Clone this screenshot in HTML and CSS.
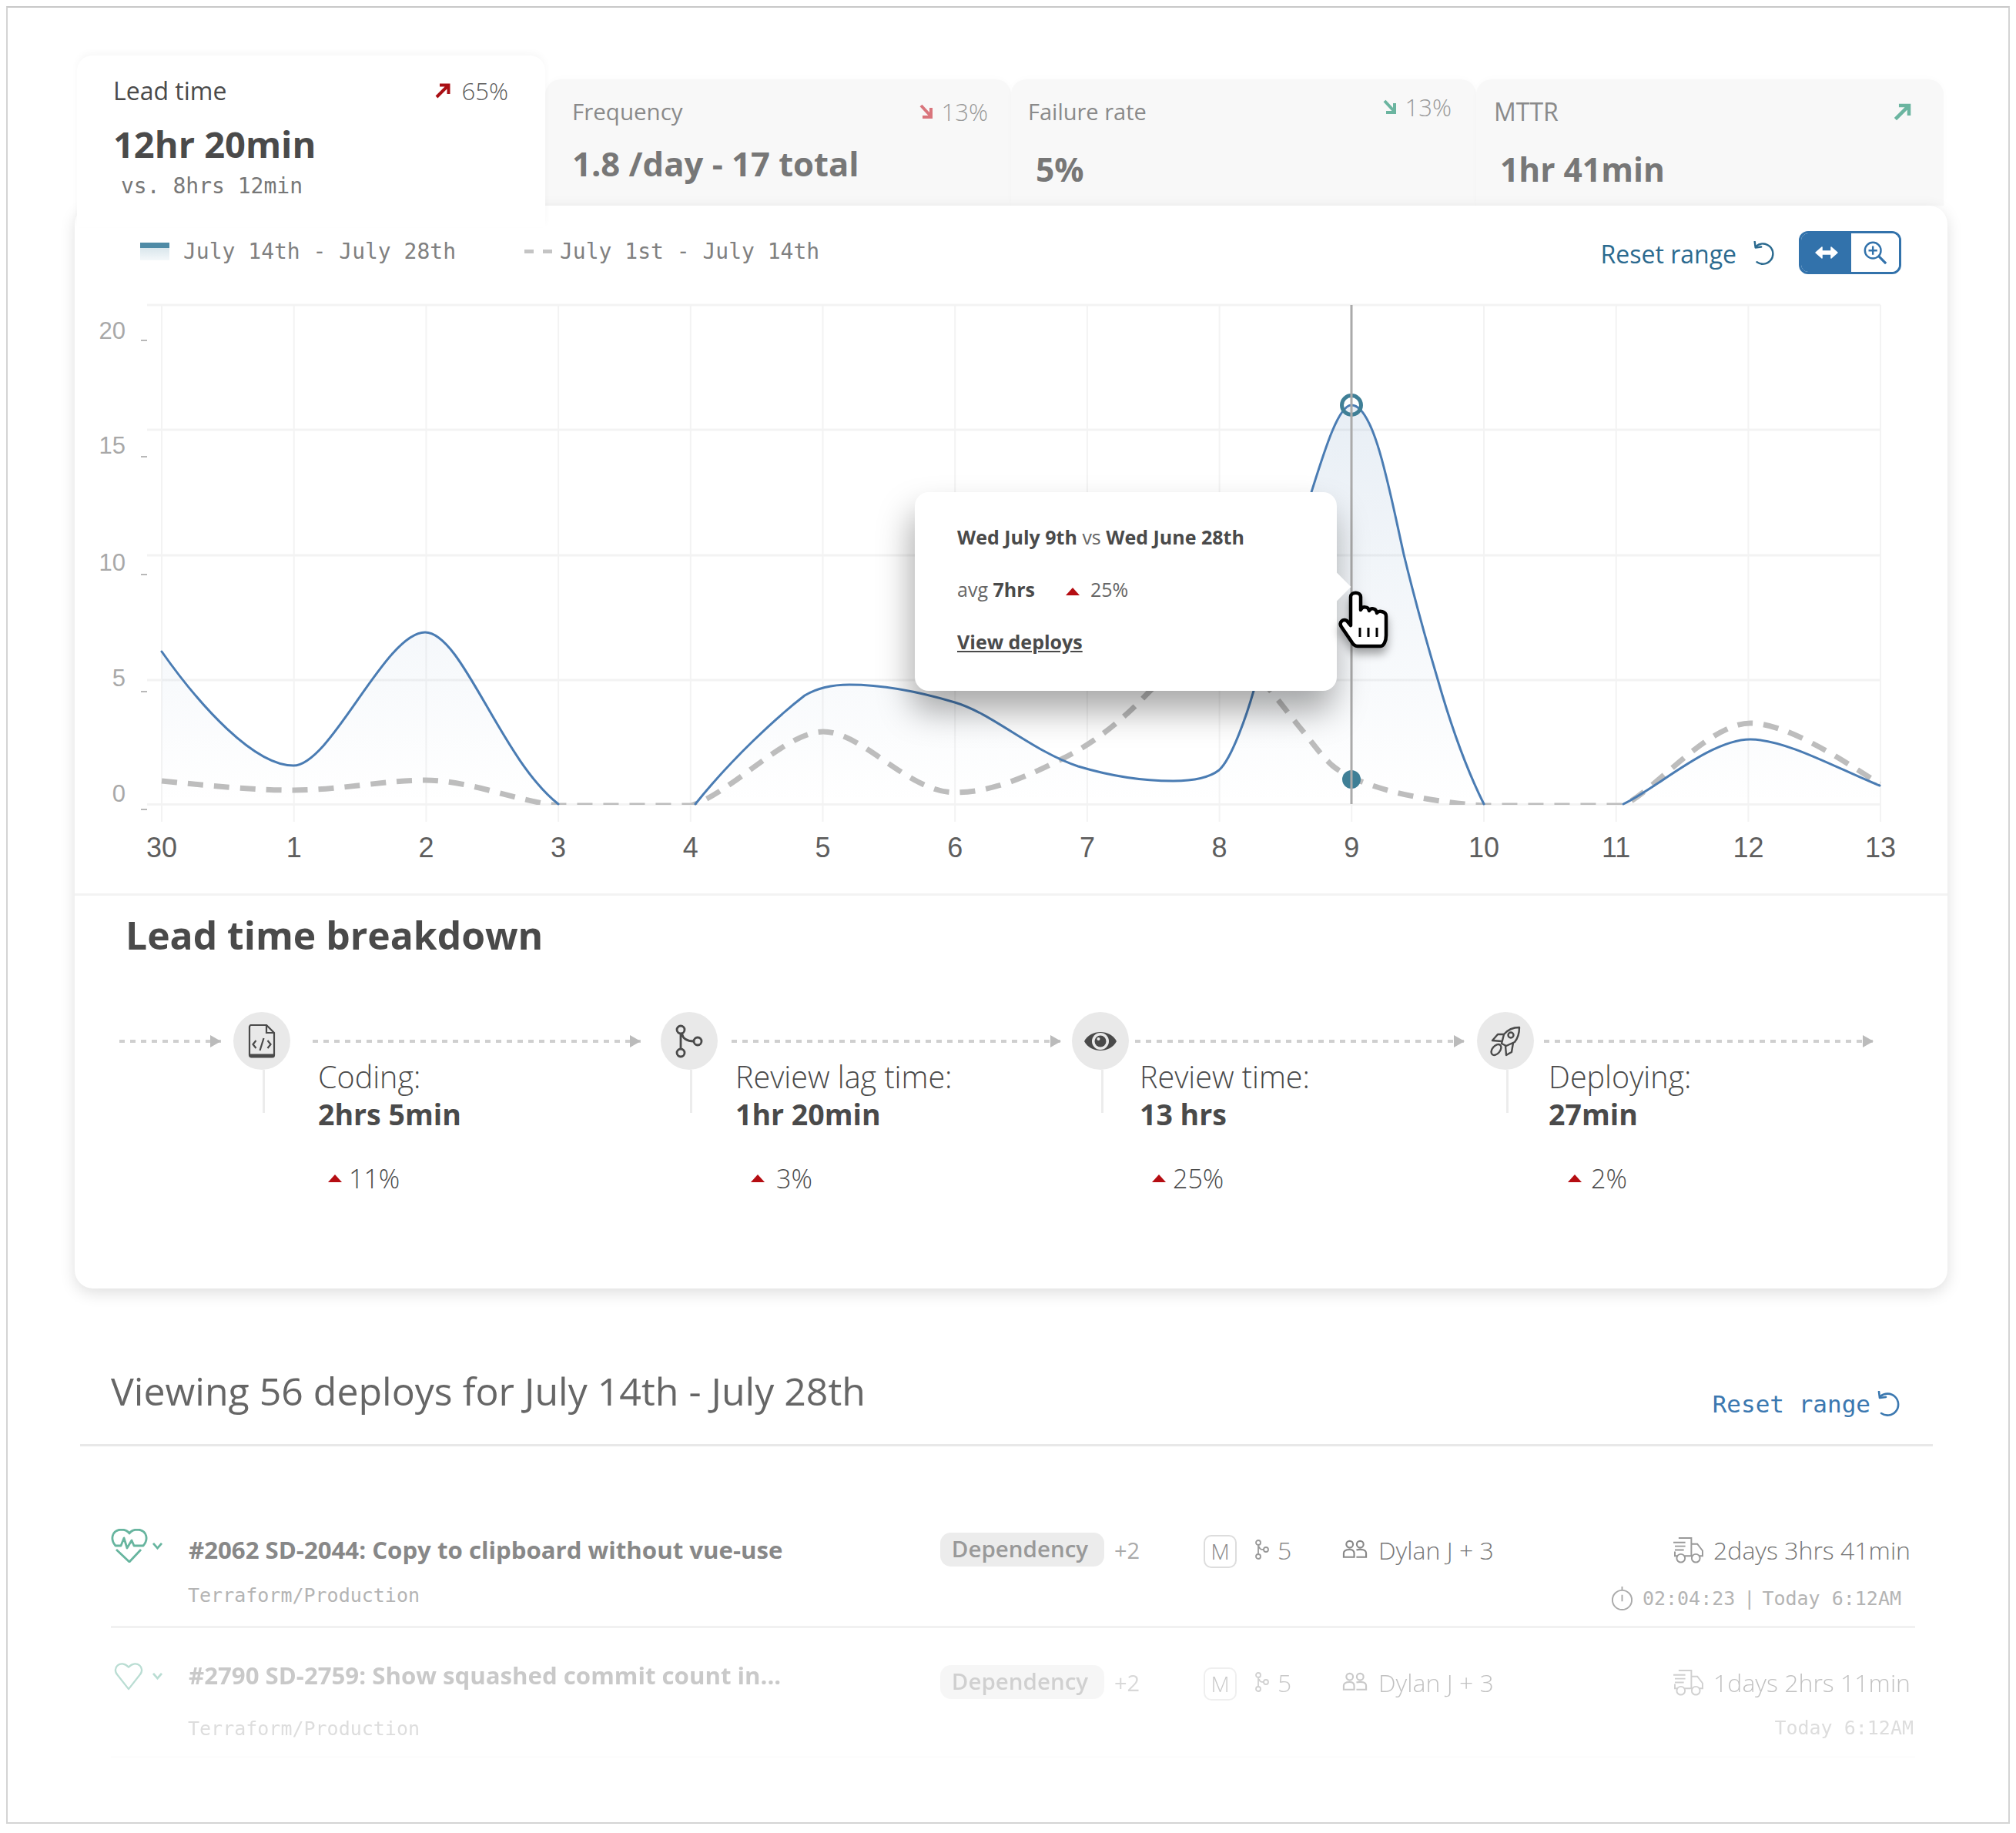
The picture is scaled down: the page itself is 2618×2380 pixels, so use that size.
FILE: index.html
```html
<!DOCTYPE html>
<html lang="en">
<head>
<meta charset="utf-8">
<title>Lead time</title>
<link rel="stylesheet" href="styles.css">
</head>
<body>
<svg class="defs" width="0" height="0" aria-hidden="true">
  <symbol id="i-reset" viewBox="0 0 36 34"><path d="M8 7 A14 14 0 1 1 9 29" fill="none" stroke="currentColor" stroke-width="2.6" stroke-linecap="round"/><path d="M6 1 L7 9 L15 8" fill="none" stroke="currentColor" stroke-width="2.6" stroke-linecap="round" stroke-linejoin="round"/></symbol>
  <symbol id="i-up" viewBox="0 0 22 20"><path d="M3 18 L18 3 M7 2.5 H18.5 V14" fill="none" stroke="currentColor" stroke-width="4"/></symbol>
  <symbol id="i-down" viewBox="0 0 20 20"><path d="M3 2 L16 16 M16 5 V17 H5" fill="none" stroke="currentColor" stroke-width="4"/></symbol>
  <symbol id="i-branch" viewBox="0 0 18 26"><g fill="none" stroke="currentColor" stroke-width="1.8"><circle cx="4" cy="4" r="3"/><circle cx="4" cy="22" r="3"/><circle cx="14" cy="13" r="3"/><path d="M4 7 V19 M5 9 C6 13 8 13 11 13"/></g></symbol>
  <symbol id="i-people" viewBox="0 0 34 26"><g fill="none" stroke="currentColor" stroke-width="2.2"><circle cx="10" cy="6" r="4.5"/><circle cx="24" cy="6" r="4.5"/><path d="M2 23 V18 C2 14 6 13 10 13 C13 13 16 14 16 18 V23 Z"/><path d="M19 13.5 C25 12 32 13 32 18 V23 H19"/></g></symbol>
  <symbol id="i-truck" viewBox="0 0 42 36"><g fill="none" stroke="currentColor" stroke-width="2"><path d="M8 2 H25 V26 H16 M25 10 H33 L40 19 V26 H36 M6 26 H3 V20"/><circle cx="11" cy="29" r="5.5"/><circle cx="31" cy="29" r="5.5"/><path d="M1 8 H17 M3 13 H17 M3 18 H15"/></g></symbol>
  <symbol id="i-watch" viewBox="0 0 30 34"><g fill="none" stroke="currentColor" stroke-width="2"><circle cx="15" cy="19" r="13"/><path d="M15 1 V6 M15 12 V21"/></g></symbol>
  <symbol id="i-chev" viewBox="0 0 16 12"><path d="M2 2 L8 9 L14 2" fill="none" stroke="currentColor" stroke-width="3"/></symbol>
</svg>

<main class="frame">
  <section class="metrics">
    <article class="tab tab-active">
      <div class="tab-head">
        <span class="tab-label">Lead time</span>
        <span class="trend trend-lead"><svg class="trend-ic ic-red"><use href="#i-up"/></svg>65%</span>
      </div>
      <div class="tab-value">12hr 20min</div>
      <div class="tab-sub">vs. 8hrs 12min</div>
    </article>
    <article class="tab tab-freq">
      <div class="tab-head">
        <span class="tab-label">Frequency</span>
        <span class="trend"><svg class="trend-ic ic-rose"><use href="#i-down"/></svg>13%</span>
      </div>
      <div class="tab-value">1.8 /day - 17 total</div>
    </article>
    <article class="tab tab-fail">
      <div class="tab-head">
        <span class="tab-label">Failure rate</span>
        <span class="trend trend-high"><svg class="trend-ic ic-green"><use href="#i-down"/></svg>13%</span>
      </div>
      <div class="tab-value">5%</div>
    </article>
    <article class="tab tab-mttr">
      <div class="tab-head">
        <span class="tab-label">MTTR</span>
        <span class="trend"><svg class="trend-ic trend-ic-lg ic-green"><use href="#i-up"/></svg></span>
      </div>
      <div class="tab-value">1hr 41min</div>
    </article>
  </section>

  <section class="panel">
    <header class="chart-head">
      <div class="legend">
        <span class="legend-item legend-a"><i class="swatch"></i>July 14th - July 28th</span>
        <span class="legend-item"><i class="swatch-dash"></i>July 1st - July 14th</span>
      </div>
      <div class="chart-tools">
        <span class="reset"><span>Reset range</span><svg class="reset-ic"><use href="#i-reset"/></svg></span>
        <div class="toggle">
          <span class="toggle-on"><svg viewBox="0 0 34 20" width="34" height="20"><path d="M3 10 L11 3 V8 H23 V3 L31 10 L23 17 V12 H11 V17 Z" fill="#fff" stroke="#fff" stroke-width="1.5" stroke-linejoin="round"/></svg></span>
          <span class="toggle-off"><svg viewBox="0 0 34 34" width="32" height="32"><g fill="none" stroke="#3272ab" stroke-width="2.6"><circle cx="14" cy="14" r="11"/><path d="M14 8 V20 M8 14 H20"/><path d="M22 22 L32 32" stroke-width="3.4"/></g></svg></span>
        </div>
      </div>
    </header>

    <div class="chart">
      <svg class="chart-svg" viewBox="97 387 2435 773" width="2435" height="773">
        <defs>
          <linearGradient id="area" gradientUnits="userSpaceOnUse" x1="0" y1="525" x2="0" y2="1044">
            <stop offset="0" stop-color="#3f75ad" stop-opacity=".12"/>
            <stop offset="1" stop-color="#3f75ad" stop-opacity="0"/>
          </linearGradient>
          <clipPath id="plot"><rect x="190" y="390" width="2260" height="655"/></clipPath>
        </defs>
        <g class="grid-v">
          <path d="M210 396V1067M381.700 396V1067M553.400 396V1067M725.100 396V1067M896.800 396V1067M1068.500 396V1067M1240.200 396V1067M1411.900 396V1067M1583.600 396V1067M1755.300 396V1067M1927 396V1067M2098.700 396V1067M2270.400 396V1067M2442 396V1067"/>
        </g>
        <g class="grid-h">
          <path d="M191 396H2442M191 558H2442M191 721H2442M191 883H2442M191 1044.500H2442"/>
        </g>
        <g class="ticks">
          <path d="M183 442H191M183 593H191M183 746H191M183 898H191M183 1051H191"/>
        </g>
        <g class="y-labels">
          <text x="163" y="440">20</text>
          <text x="163" y="589">15</text>
          <text x="163" y="741">10</text>
          <text x="163" y="891">5</text>
          <text x="163" y="1041">0</text>
        </g>
        <g class="x-labels">
          <text x="210" y="1113">30</text>
          <text x="381.700" y="1113">1</text>
          <text x="553.400" y="1113">2</text>
          <text x="725.100" y="1113">3</text>
          <text x="896.800" y="1113">4</text>
          <text x="1068.500" y="1113">5</text>
          <text x="1240.200" y="1113">6</text>
          <text x="1411.900" y="1113">7</text>
          <text x="1583.600" y="1113">8</text>
          <text x="1755.300" y="1113">9</text>
          <text x="1927" y="1113">10</text>
          <text x="2098.700" y="1113">11</text>
          <text x="2270.400" y="1113">12</text>
          <text x="2442" y="1113">13</text>
        </g>
        <g fill="url(#area)">
          <path d="M210 1044V846C260 917 330 994 381 994C430 994 500 821 552 821C600 821 650 985 725 1044Z"/>
          <path d="M903 1044C950 985 1010 930 1045 903C1065 891 1085 889 1103 889C1150 889 1200 900 1240 912C1290 927 1340 975 1400 995C1450 1010 1490 1014 1523 1014C1550 1014 1570 1010 1583 1000C1600 985 1620 925 1628 897C1650 815 1680 700 1703 639C1720 585 1738 526 1755 526C1785 526 1805 640 1823 720C1840 790 1850 825 1867 882C1885 945 1905 1000 1927 1044Z"/>
          <path d="M2108 1044C2150 1025 2220 960 2273 960C2320 960 2390 1000 2441 1020V1044Z"/>
        </g>
        <path class="line-prev" clip-path="url(#plot)" d="M210 1014C270 1020 330 1026 381 1026C440 1026 500 1013 552 1013C610 1013 670 1040 725 1046L897 1046C950 1030 1020 950 1069 950C1120 950 1180 1029 1240 1029C1290 1029 1340 1005 1380 985C1420 965 1450 940 1475 916C1510 880 1550 840 1583 830C1610 840 1630 870 1650 897C1665 915 1680 935 1690 947C1705 965 1715 980 1729 993C1760 1020 1840 1040 1927 1046L2108 1046C2150 1025 2220 939 2273 939C2320 939 2390 985 2441 1018"/>
        <g class="line-cur">
          <path d="M210 846C260 917 330 994 381 994C430 994 500 821 552 821C600 821 650 985 725 1044"/>
          <path d="M903 1044C950 985 1010 930 1045 903C1065 891 1085 889 1103 889C1150 889 1200 900 1240 912C1290 927 1340 975 1400 995C1450 1010 1490 1014 1523 1014C1550 1014 1570 1010 1583 1000C1600 985 1620 925 1628 897C1650 815 1680 700 1703 639C1720 585 1738 526 1755 526C1785 526 1805 640 1823 720C1840 790 1850 825 1867 882C1885 945 1905 1000 1927 1044"/>
          <path d="M2108 1044C2150 1025 2220 960 2273 960C2320 960 2390 1000 2441 1020"/>
        </g>
        <circle class="dot" cx="1755" cy="1012" r="12"/>
        <circle class="ring" cx="1755" cy="526" r="12.500"/>
        <path class="cursor-line" d="M1755 396V1044"/>
      </svg>

      <aside class="tooltip">
        <p class="tip-line"><b>Wed July 9th</b> vs <b>Wed June 28th</b></p>
        <p class="tip-line">avg <b>7hrs</b><i class="tri tip-tri"></i>25%</p>
        <p class="tip-line"><a class="tip-link">View deploys</a></p>
      </aside>
      <svg class="hand" viewBox="-3 -3 71 81" width="71" height="81">
        <path d="M15 8C15 1 28 1 28 8V25C30 20 38 20 39 26C41 22 48 22 49 29C52 25 61 27 61 33V58C61 65 58 72 54 72H24C20 72 18 70 16 66L3 47C-1 41 5 36 10 39L15 45Z" fill="#fff" stroke="#000" stroke-width="4.500" stroke-linejoin="round"/>
        <path d="M27 48V60M38 48V60M49 48V60" stroke="#000" stroke-width="3" fill="none"/>
      </svg>
    </div>

    <section class="breakdown">
      <h2 class="breakdown-title">Lead time breakdown</h2>
      <div class="flow">
        <div class="lead-arrow"><span class="dash"></span></div>

        <div class="step step-1">
          <div class="step-head">
            <span class="node"><svg viewBox="0 0 36 44" width="36" height="44"><g fill="none" stroke="#4a4a4a" stroke-width="2.200"><path d="M2 3.500C2 2 3 1 4.500 1H24L34 11V40C34 41.500 33 42.500 31.500 42.500H4.500C3 42.500 2 41.500 2 40Z"/><path d="M24 1V11H34"/><path d="M10.500 21L6.500 26L10.500 31M25.500 21L29.500 26L25.500 31M20.500 18L15.500 34"/></g><path d="M2 38.500H34V40C34 41.500 33 42.500 31.500 42.500H4.500C3 42.500 2 41.500 2 40Z" fill="#4a4a4a"/></svg></span>
            <span class="dash"></span>
          </div>
          <div class="step-body">
            <span class="stem"></span>
            <div class="step-text">
              <div class="step-label">Coding:</div>
              <div class="step-value">2hrs 5min</div>
              <div class="step-delta"><i class="tri"></i>11%</div>
            </div>
          </div>
        </div>

        <div class="step step-2">
          <div class="step-head">
            <span class="node"><svg viewBox="0 0 38 44" width="38" height="44"><g fill="none" stroke="#4a4a4a" stroke-width="2.800"><circle cx="8" cy="7" r="5"/><circle cx="8" cy="37" r="5"/><circle cx="30" cy="22" r="5"/><path d="M8 12V32M9.500 12C11 20 17 22 25 22"/></g></svg></span>
            <span class="dash"></span>
          </div>
          <div class="step-body">
            <span class="stem"></span>
            <div class="step-text">
              <div class="step-label">Review lag time:</div>
              <div class="step-value">1hr 20min</div>
              <div class="step-delta"><i class="tri"></i>3%</div>
            </div>
          </div>
        </div>

        <div class="step step-3">
          <div class="step-head">
            <span class="node"><svg viewBox="0 0 44 32" width="44" height="32"><path d="M1 16C9 0 35 0 43 16C35 32 9 32 1 16Z" fill="#4a4a4a"/><circle cx="22" cy="16" r="11" fill="#e9e9e9"/><circle cx="22" cy="16" r="7.500" fill="#4a4a4a"/><circle cx="19.500" cy="13" r="2" fill="#e9e9e9"/></svg></span>
            <span class="dash"></span>
          </div>
          <div class="step-body">
            <span class="stem"></span>
            <div class="step-text">
              <div class="step-label">Review time:</div>
              <div class="step-value">13 hrs</div>
              <div class="step-delta"><i class="tri"></i>25%</div>
            </div>
          </div>
        </div>

        <div class="step step-4">
          <div class="step-head">
            <span class="node"><svg viewBox="0 0 40 40" width="40" height="40"><g fill="none" stroke="#4a4a4a" stroke-width="2.400" stroke-linejoin="round"><path d="M38 2C30 2 23 5 18 11L15 23L21 26L32 21C36 16 38 9 38 2Z"/><circle cx="27" cy="12" r="3.500"/><path d="M18 11H10L3 19L15 20"/><path d="M30 22L28 34L21 38L20 26"/><ellipse cx="8" cy="31" rx="8" ry="5" transform="rotate(-50 8 31)"/></g></svg></span>
            <span class="dash"></span>
          </div>
          <div class="step-body">
            <span class="stem"></span>
            <div class="step-text">
              <div class="step-label">Deploying:</div>
              <div class="step-value">27min</div>
              <div class="step-delta"><i class="tri"></i>2%</div>
            </div>
          </div>
        </div>
      </div>
    </section>
  </section>

  <section class="deploys">
    <header class="deploys-head">
      <h2 class="deploys-title">Viewing 56 deploys for July 14th - July 28th</h2>
      <span class="deploys-reset">Reset range<svg class="deploys-reset-ic"><use href="#i-reset"/></svg></span>
    </header>

    <article class="row row-first">
      <div class="health">
        <svg class="heart" viewBox="0 0 48 44"><g fill="none" stroke="#67b59f" stroke-width="2.800" stroke-linejoin="round"><path d="M6 22C-1 14 1 2 13 1C18 1 22 3 24 6C26 3 30 1 35 1C47 2 49 14 42 22H30L27 15L21 25L17 12L13 22Z"/><path d="M7 27L24 43L39 27"/></g></svg>
        <svg class="chev"><use href="#i-chev"/></svg>
      </div>
      <div class="title">#2062 SD-2044: Copy to clipboard without vue-use</div>
      <div class="tags"><span class="badge">Dependency</span><span class="plus">+2</span></div>
      <div class="size"><span class="m">M</span><svg class="mini-branch"><use href="#i-branch"/></svg><span>5</span></div>
      <div class="meta">
        <span class="people"><svg class="people-ic"><use href="#i-people"/></svg>Dylan J + 3</span>
        <span class="duration"><svg class="truck-ic"><use href="#i-truck"/></svg>2days 3hrs 41min</span>
      </div>
      <div class="repo">Terraform/Production</div>
      <div class="time"><svg class="watch-ic"><use href="#i-watch"/></svg><span class="time-num">02:04:23</span><span class="time-bar">|</span><span>Today 6:12AM</span></div>
    </article>

    <article class="row row-faded">
      <div class="health">
        <svg class="heart heart-plain" viewBox="0 0 40 40"><path d="M20 38L5 19C-4 9 9-3 20 8C31-3 44 9 35 19Z" fill="none" stroke="#67b59f" stroke-width="2.400" stroke-linejoin="round"/></svg>
        <svg class="chev"><use href="#i-chev"/></svg>
      </div>
      <div class="title">#2790 SD-2759: Show squashed commit count in...</div>
      <div class="tags"><span class="badge">Dependency</span><span class="plus">+2</span></div>
      <div class="size"><span class="m">M</span><svg class="mini-branch"><use href="#i-branch"/></svg><span>5</span></div>
      <div class="meta">
        <span class="people"><svg class="people-ic"><use href="#i-people"/></svg>Dylan J + 3</span>
        <span class="duration"><svg class="truck-ic"><use href="#i-truck"/></svg>1days 2hrs 11min</span>
      </div>
      <div class="repo">Terraform/Production</div>
      <div class="time"><span>Today 6:12AM</span></div>
    </article>
  </section>
</main>
</body>
</html>
```

FILE: styles.css
```css
* { box-sizing: border-box; }
html, body { margin: 0; padding: 0; background: #fff; }
body { font-family: "Open Sans", "Liberation Sans", sans-serif; color: #4a4a4a; }
.defs { position: absolute; }
p, h2 { margin: 0; font-weight: inherit; }

.frame {
  width: 2602px;
  height: 2360px;
  margin: 8px 0 0 8px;
  border: 2px solid #d4d4d4;
  border-top-color: #c8c8c8;
  padding-top: 62px;
}

/* metric tabs */
.metrics {
  display: flex;
  align-items: flex-start;
  height: 195px;
  margin-left: 90px;
  position: relative;
}
.tab {
  height: 164px;
  margin-top: 31px;
  background: #f8f8f8;
  border-radius: 20px 20px 0 0;
  box-shadow: 0 -1px 8px rgba(0,0,0,.02);
  color: #8a8a8a;
  position: relative;
}
.tab-active {
  width: 608px;
  height: 223px;
  margin-top: 0;
  background: #fff;
  color: #4a4a4a;
  z-index: 2;
  padding: 22px 48px 0 47px;
  box-shadow: 0 -4px 10px rgba(0,0,0,.03);
}
.tab-freq { width: 605px; padding: 18px 30px 0 35px; }
.tab-fail { width: 604px; padding: 18px 32px 0 22px; }
.tab-mttr { width: 607px; padding: 18px 41px 0 23px; }
.tab-head { display: flex; justify-content: space-between; align-items: center; height: 48px; }
.tab-label { font-size: 32px; line-height: 48px; }
.tab-freq .tab-label { font-size: 29.500px; }
.tab-fail .tab-label { font-size: 29px; }
.tab-active .tab-label { color: #4a4a4a; }
.trend { display: flex; align-items: center; gap: 13px; font-size: 31px; font-weight: 300; color: #999; }
.tab-freq .trend { gap: 9px; }
.tab-fail .trend { gap: 9px; }
.trend-lead { color: #5a5a5a; gap: 14px; }
.trend-high { position: relative; top: -6px; }
.trend-ic { width: 22px; height: 20px; }
.trend-ic-lg { width: 25px; height: 23px; }
.ic-red { color: #a90f14; }
.ic-rose { color: #d9757c; }
.ic-green { color: #6bb5a0; }
.tab-value { font-size: 47px; font-weight: 700; line-height: 62px; color: #777; }
.tab-active .tab-value { color: #4a4a4a; margin-top: 14px; }
.tab-freq .tab-value { font-size: 43.600px; margin-top: 12px; }
.tab-fail .tab-value { font-size: 42.500px; margin: 20px 0 0 10px; }
.tab-mttr .tab-value { font-size: 42.500px; margin: 20px 0 0 8px; }
.tab-sub { font-family: "DejaVu Sans Mono", monospace; font-size: 28px; line-height: 40px; color: #777; margin: 4px 0 0 10px; }

/* main panel */
.panel {
  position: relative;
  width: 2432px;
  height: 1406px;
  margin-left: 87px;
  background: #fff;
  border-radius: 24px;
  box-shadow: 0 6px 20px rgba(0,0,0,.13);
  z-index: 1;
}
.chart-head {
  display: flex;
  justify-content: space-between;
  align-items: center;
  height: 120px;
  padding: 0 60px 0 85px;
}
.legend { display: flex; font-family: "DejaVu Sans Mono", monospace; font-size: 28px; color: #808080; margin-top: -2px; }
.legend-item { display: flex; align-items: center; }
.legend-a { width: 499px; }
.swatch {
  width: 38px;
  height: 23px;
  margin-right: 18px;
  background: linear-gradient(#4f8ba6 0 7px, #d9e6ec 7px, #f4f8fa 100%);
}
.swatch-dash {
  width: 36px;
  height: 5px;
  margin-right: 10px;
  background: repeating-linear-gradient(90deg, #c4c4c4 0 12px, transparent 12px 24px);
}
.chart-tools { display: flex; align-items: center; }
.reset { display: flex; align-items: center; font-size: 32px; color: #2b6a8f; font-weight: 500; margin-top: 4px; }
.reset-ic { width: 34px; height: 32px; margin-left: 18px; color: #2b6a8f; }
.toggle {
  display: flex;
  width: 133px;
  height: 56px;
  margin: 2px 0 0 29px;
  border: 3px solid #3272ab;
  border-radius: 12px;
  overflow: hidden;
}
.toggle-on { display: flex; align-items: center; justify-content: center; width: 65px; background: #3272ab; }
.toggle-off { display: flex; align-items: center; justify-content: center; flex: 1; background: #fff; }

/* chart */
.chart { position: relative; height: 776px; border-bottom: 3px solid #f3f3f3; }
.chart-svg { display: block; }
.grid-v path { stroke: #f3f3f3; stroke-width: 2; fill: none; }
.grid-h path { stroke: #f3f3f3; stroke-width: 3; fill: none; }
.ticks path { stroke: #b8b8b8; stroke-width: 2; fill: none; }
.y-labels text { font-family: "Liberation Sans", sans-serif; font-size: 31px; fill: #a8a8a8; text-anchor: end; }
.x-labels text { font-family: "Liberation Sans", sans-serif; font-size: 36px; fill: #5e5e5e; text-anchor: middle; }
.line-prev { fill: none; stroke: #bdbdbd; stroke-width: 7; stroke-dasharray: 20 14; }
.line-cur path { fill: none; stroke: #4a7cb3; stroke-width: 3; stroke-linecap: round; }
.dot { fill: #3f7f96; }
.ring { fill: none; stroke: #3f7f96; stroke-width: 5; }
.cursor-line { stroke: #aaa; stroke-width: 3; fill: none; }

.tooltip {
  position: absolute;
  left: 1091px;
  top: 252px;
  width: 548px;
  height: 258px;
  padding: 31px 0 0 55px;
  background: #fff;
  border-radius: 18px;
  box-shadow: -4px 26px 44px rgba(0,0,0,.34);
  font-size: 25px;
  color: #666;
}
.tooltip::after {
  content: "";
  position: absolute;
  right: -13px;
  top: 110px;
  width: 26px;
  height: 26px;
  background: #fff;
  transform: rotate(45deg);
}
.tip-line { height: 68px; line-height: 54px; }
.tip-line b { font-weight: 700; color: #4a4a4a; }
.tip-tri { margin: 0 14px 0 40px; }
.tip-link { font-weight: 700; color: #4a4a4a; text-decoration: underline; }
.tri {
  display: inline-block;
  flex: none;
  width: 0;
  height: 0;
  border-left: 9px solid transparent;
  border-right: 9px solid transparent;
  border-bottom: 10px solid #b50d12;
  vertical-align: middle;
}
.hand {
  position: absolute;
  left: 1639px;
  top: 377px;
  filter: drop-shadow(0 8px 6px rgba(0,0,0,.35));
}

/* breakdown */
.breakdown { padding-top: 16px; }
.breakdown-title { font-size: 49.800px; font-weight: 700; line-height: 70px; padding-left: 66px; color: #4a4a4a; }
.flow {
  display: grid;
  grid-template-columns: 148px 555px 534px 526px 515px;
  margin: 65px 0 0 58px;
}
.lead-arrow { display: flex; align-items: center; height: 75px; padding-right: 16px; }
.dash {
  position: relative;
  flex: 1;
  height: 4px;
  background: repeating-linear-gradient(90deg, #cfcfcf 0 7px, transparent 7px 14px);
}
.dash::after {
  content: "";
  position: absolute;
  right: 0;
  top: -6px;
  border-left: 14px solid #bbb;
  border-top: 8px solid transparent;
  border-bottom: 8px solid transparent;
}
.step-head { display: flex; align-items: center; height: 75px; }
.step-1 { --gl: 29px; --gr: 26px; --tx: 69px; --dx: 13px; --dg: 9px; }
.step-2 { --gl: 18px; --gr: 14px; --tx: 56px; --dx: 20px; --dg: 15px; }
.step-3 { --gl: 8px; --gr: 16px; --tx: 47px; --dx: 16px; --dg: 9px; }
.step-4 { --gl: 13px; --gr: 0px; --tx: 52px; --dx: 25px; --dg: 12px; }
.step-head .dash { margin: 0 var(--gr) 0 var(--gl); }
.node {
  display: flex;
  align-items: center;
  justify-content: center;
  flex: none;
  width: 74px;
  height: 75px;
  border-radius: 50%;
  background: #e9e9e9;
}
.step-body { display: flex; }
.stem { flex: none; width: 3px; height: 56px; margin-left: 38px; background: #ececec; }
.step-text { margin: -15px 0 0 var(--tx); }
.step-label { font-size: 39.500px; line-height: 48px; font-weight: 300; color: #4a4a4a; }
.step-value { font-size: 37.500px; line-height: 50px; font-weight: 700; color: #4a4a4a; }
.step-delta { display: flex; align-items: center; gap: var(--dg); margin: 34px 0 0 var(--dx); font-size: 34px; line-height: 48px; font-weight: 300; color: #4a4a4a; }

/* deploys */
.deploys { width: 2406px; margin: 99px 0 0 94px; }
.deploys-head {
  display: flex;
  justify-content: space-between;
  align-items: flex-start;
  height: 106px;
  padding: 0 40px;
  border-bottom: 3px solid #e8e8e8;
}
.deploys-title { font-size: 50px; line-height: 68px; font-weight: 400; color: #666; }
.deploys-reset {
  display: flex;
  align-items: center;
  margin-top: 33px;
  font-family: "DejaVu Sans Mono", monospace;
  font-size: 31px;
  line-height: 36px;
  color: #3b78b0;
}
.deploys-reset-ic { width: 36px; height: 34px; margin-left: 5px; }
.row {
  display: grid;
  grid-template-columns: 101px 976px 342px 180px 1fr;
  grid-template-rows: 44px 36px;
  width: 2343px;
  margin-left: 40px;
  border-bottom: 3px solid #f1f1f1;
}
.row-first { padding: 112px 0 20px; row-gap: 18px; height: 236px; }
.row-faded { padding: 48px 0 18px; row-gap: 19px; height: 169px; border-bottom-color: #fdfdfd; }
.row-faded > * { opacity: .45; }
.health { display: flex; align-items: flex-start; margin-top: -5px; }
.heart { width: 48px; height: 44px; flex: none; }
.chev { width: 15px; height: 11px; margin: 17px 0 0 5px; color: #67b59f; }
.row-faded .health { margin: -5px 0 0 3px; }
.heart-plain { width: 40px; height: 38px; }
.row-faded .chev { margin: 14px 0 0 10px; }
.title { font-size: 31.200px; font-weight: 700; line-height: 44px; color: #888; white-space: nowrap; }
.row-faded .title { margin-top: -9px; }
.tags { display: flex; align-items: center; }
.badge {
  display: flex;
  align-items: center;
  justify-content: center;
  width: 213px;
  height: 44px;
  padding: 0 6px 3px 0;
  border-radius: 14px;
  background: #ececec;
  font-size: 29.500px;
  font-weight: 600;
  color: #999;
}
.plus { margin-left: 13px; font-size: 29px; color: #aaa; }
.size { display: flex; align-items: center; font-size: 32px; font-weight: 300; color: #888; }
.m {
  display: flex;
  align-items: center;
  justify-content: center;
  width: 43px;
  height: 43px;
  border: 2px solid #ddd;
  border-radius: 10px;
  font-size: 28px;
  margin-top: 4px;
}
.mini-branch { width: 18px; height: 26px; margin: 0 11px 0 24px; color: #999; }
.meta { display: flex; justify-content: space-between; align-items: center; padding-right: 6px; font-size: 32px; font-weight: 300; color: #777; }
.people, .duration { display: flex; align-items: center; }
.people-ic { width: 33px; height: 26px; margin-right: 14px; color: #888; }
.truck-ic { width: 41px; height: 35px; margin-right: 12px; color: #999; }
.repo { grid-column: 2; margin: 2px 0 0 -1px; font-family: "DejaVu Sans Mono", monospace; font-size: 25px; line-height: 36px; color: #b4b4b4; }
.time {
  grid-column: 3 / 6;
  display: flex;
  justify-content: flex-end;
  align-items: center;
  padding: 10px 18px 0 0;
  font-family: "DejaVu Sans Mono", monospace;
  font-size: 25px;
  color: #b4b4b4;
}
.row-faded .time { padding: 0 2px 0 0; }
.watch-ic { width: 29px; height: 33px; margin-right: 12px; color: #aaa; }
.time-bar { margin: 0 9px 0 11px; }
```
